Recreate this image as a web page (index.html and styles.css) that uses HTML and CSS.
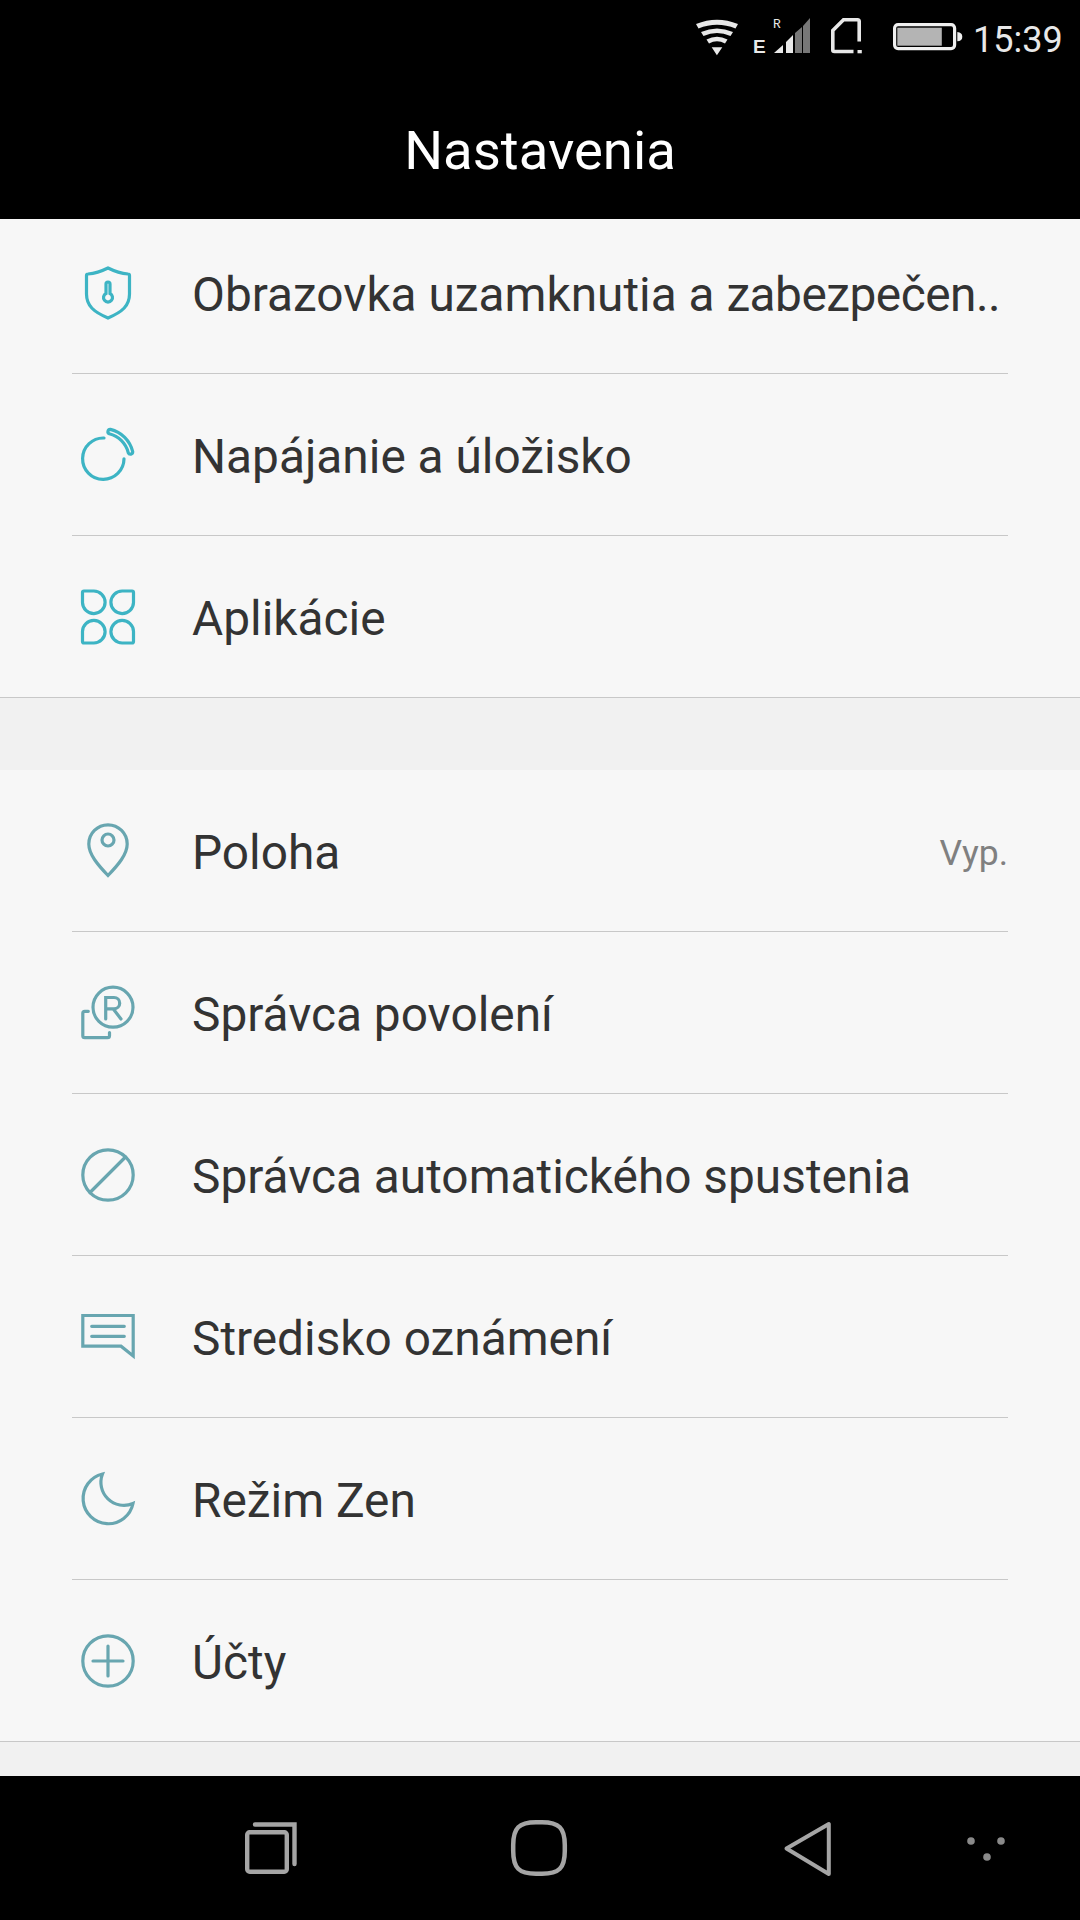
FILE: index.html
```html
<!DOCTYPE html>
<html lang="sk">
<head>
<meta charset="utf-8">
<title>Nastavenia</title>
<link rel="stylesheet" href="styles.css">
</head>
<body>
<div class="screen">
  <header class="top">
    <div class="status">
      <svg class="st-wifi" width="42" height="37" viewBox="0 0 42 37"><path d="M0 5Q21-3.500 42 5L39.500 9.500Q21 2 2.500 9.500Z M5 13Q21 6 37 13L34.500 17Q21 11 7.500 17Z M10.500 20.500Q21 15 31.500 20.500L29 24.500Q21 20 13 24.500Z M15.700 28.300H26.300L20.900 36.300Z" fill="#e8e8e8"/></svg>
      <svg class="st-signal" width="57" height="44" viewBox="0 0 57 44"><text class="st-e" x="0" y="35">E</text><text class="st-r" x="20" y="10">R</text><path d="M21 35L30 27V35Z M33 35V24L40 17V35Z" fill="#e8e8e8"/><path d="M42 35V15L49 9V35Z M50 35V8L57 0V35Z" fill="#777"/></svg>
      <svg class="st-sim" width="31" height="36" viewBox="0 0 31 36"><path d="M28.200 23.500V3.500Q28.200 1.800 26.500 1.800H12.500L1.800 12.500V32Q1.800 33.500 3.500 33.500H22.500" fill="none" stroke="#e8e8e8" stroke-width="3.600"/><rect x="26.500" y="32" width="4.300" height="3.300" fill="#e8e8e8"/></svg>
      <svg class="st-batt" width="70" height="28" viewBox="0 0 70 28"><rect x="1.600" y="1.600" width="60" height="24" rx="3.500" fill="none" stroke="#f0f0f0" stroke-width="3.200"/><rect x="4.300" y="4.700" width="44.500" height="18" fill="#b4b4b4"/><path d="M64.300 9Q69.300 9.500 69.300 13.700Q69.300 18 64.300 18.300Z" fill="#f0f0f0"/></svg>
      <span class="clock">15:39</span>
    </div>
    <h1 class="title">Nastavenia</h1>
  </header>

  <main class="list">
    <section class="group group-first">
      <div class="row"><svg class="ico cy" viewBox="0 0 60 60"><path d="M30 5C24 8 16 10.500 10 11Q8.500 11 8.500 12.500V31C8.500 43 16 49 30 55C44 49 51.500 43 51.500 31V12.500Q51.500 11 50 11C44 10.500 36 8 30 5Z"/><path d="M28 30.500V21a2 2 0 0 1 4 0V30.500a4.500 4.500 0 1 1-4 0Z"/></svg><span class="label">Obrazovka uzamknutia a <span class="tight">zabezpečen..</span></span></div>
      <div class="row"><svg class="ico cy" viewBox="0 0 60 60"><path d="M26 13A20.700 20.700 0 1 0 46 33.800"/><path d="M32.400 4.400A30.200 30.200 0 0 1 54.700 26.700A2.300 2.300 0 0 1 50.300 27.800A25.700 25.700 0 0 0 31.300 8.800A2.300 2.300 0 0 1 32.400 4.400Z"/></svg><span class="label">Napájanie a úložisko</span></div>
      <div class="row"><svg class="ico cy" viewBox="0 0 60 60"><path d="M6 4H15.800A11.300 11.300 0 1 1 4.500 15.500V5.500Q4.500 4 6 4Z"/><path d="M54 4H44.200A11.300 11.300 0 1 0 55.500 15.500V5.500Q55.500 4 54 4Z"/><path d="M6 56H15.800A11.300 11.300 0 1 0 4.500 44.500V54.500Q4.500 56 6 56Z"/><path d="M54 56H44.200A11.300 11.300 0 1 1 55.500 44.500V54.500Q55.500 56 54 56Z"/></svg><span class="label">Aplikácie</span></div>
    </section>
    <div class="gap"></div>
    <section class="group">
      <div class="row"><svg class="ico te" viewBox="0 0 60 60"><path d="M30 54.500C20 44 10.800 33.500 10.800 23A19.200 19.200 0 0 1 49.200 23C49.200 33.500 40 44 30 54.500Z"/><circle cx="30" cy="19" r="6"/></svg><span class="label">Poloha</span><span class="value">Vyp.</span></div>
      <div class="row"><svg class="ico te" viewBox="0 0 60 60"><circle cx="35" cy="24.200" r="20"/><path d="M27.700 36V14.500H36a5.700 5.700 0 0 1 0 11.400H27.700M35.300 26L43 36"/><path d="M10.300 28.300H6.800Q4.800 28.300 4.800 30.300V52.700Q4.800 54.700 6.800 54.700H29.500Q31.500 54.700 31.500 52.700V49.500"/></svg><span class="label">Správca povolení</span></div>
      <div class="row"><svg class="ico te" viewBox="0 0 60 60"><circle cx="30" cy="30" r="25.200"/><path d="M12 47.500L47.500 12"/></svg><span class="label">Správca automatického spustenia</span></div>
      <div class="row"><svg class="ico te" viewBox="0 0 60 60"><path d="M4.800 8.500H55.200V49L43 39.200H4.800Z"/><path d="M13.700 19.300H46.300M13.700 29.300H46.300"/></svg><span class="label">Stredisko oznámení</span></div>
      <div class="row"><svg class="ico te" viewBox="0 0 60 60"><path d="M24.500 5A25.200 25.200 0 1 0 55 34.500A23 23 0 0 1 24.500 5Z"/></svg><span class="label">Režim Zen</span></div>
      <div class="row"><svg class="ico te" viewBox="0 0 60 60"><circle cx="30" cy="30" r="25.200"/><path d="M30 15V45M15 30H45"/></svg><span class="label">Účty</span></div>
    </section>
    <div class="gap-end"></div>
  </main>

  <nav class="nav">
    <svg class="nv nv-rec" width="52" height="52" viewBox="0 0 52 52"><rect x="2.200" y="10.200" width="39.600" height="39.600" rx="2.500" fill="none" stroke="#a5a5a5" stroke-width="4.400"/><path d="M10 2.500H49.500V42" fill="none" stroke="#a5a5a5" stroke-width="4.400" stroke-linecap="round"/></svg>
    <svg class="nv nv-home" width="58" height="58" viewBox="0 0 58 58"><path d="M29 3.200H32C49 3.200 54.800 9 54.800 26V32C54.800 49 49 54.800 32 54.800H26C9 54.800 3.200 49 3.200 32V26C3.200 9 9 3.200 26 3.200Z" fill="none" stroke="#a5a5a5" stroke-width="4.500"/></svg>
    <svg class="nv nv-back" width="50" height="56" viewBox="0 0 50 56"><path d="M45.800 3V53L3.500 27.500Z" fill="none" stroke="#a5a5a5" stroke-width="4" stroke-linejoin="round"/></svg>
    <svg class="nv nv-dots" width="46" height="34" viewBox="0 0 46 34"><g fill="#8a8a8a"><circle cx="8" cy="10" r="3.800"/><circle cx="38" cy="10" r="3.800"/><circle cx="24" cy="26" r="3.800"/></g></svg>
  </nav>
</div>
</body>
</html>
```
FILE: styles.css
```css
* { box-sizing: border-box; }
html, body { margin: 0; padding: 0; }
body { width: 1080px; height: 1920px; overflow: hidden; font-family: Roboto, "Noto Sans", sans-serif; background: #000; }
.screen { width: 1080px; height: 1920px; display: flex; flex-direction: column; }
.top { height: 219px; background: #000; flex: none; display: flex; flex-direction: column; }
.status { height: 76px; display: flex; align-items: flex-start; padding-top: 18px; padding-left: 696px; color: #e8e8e8; }
.status svg { flex: none; }
.st-wifi { margin-top: 1px; margin-right: 15px; }
.st-signal { margin-right: 21px; }
.st-sim { margin-right: 31px; }
.st-batt { margin-top: 5px; margin-right: 10px; }
.st-e { font: bold 19px "Liberation Sans", sans-serif; fill: #e8e8e8; }
.st-r { font: 13px "Liberation Mono", monospace; fill: #e8e8e8; }
.clock { margin-top: 2px; font-size: 36px; line-height: 40px; color: #e8e8e8; }
.title { margin: 0; flex: 1; display: flex; align-items: center; justify-content: center; padding-top: 4px; font-size: 54.500px; font-weight: 400; color: #fff; }
.list { flex: 1; background: #f1f1f1; display: flex; flex-direction: column; overflow: hidden; }
.group { background: #f7f7f7; border-bottom: 1px solid #c8c8c8; }
.group-first { margin-top: -7px; }
.gap { height: 72px; flex: none; }
.gap-end { flex: 1; }
.row { height: 162px; margin: 0 72px; display: flex; align-items: center; border-bottom: 1px solid #c8c8c8; }
.row:last-child { border-bottom: 0; height: 161px; }
.ico { width: 60px; height: 60px; margin-right: 54px; margin-left: 6px; flex: none; fill: none; stroke-width: 3.200; stroke-linecap: round; }
.cy { stroke: #3db4c4; }
.te { stroke: #68a6b0; }
.label { flex: 1; font-size: 47.800px; color: #333; white-space: nowrap; padding-top: 4px; }
.tight { letter-spacing: -0.500px; }
.value { font-size: 35.500px; color: #808080; padding-top: 4px; }
.nav { height: 144px; flex: none; background: #000; position: relative; }
.nv { position: absolute; }
.nv-rec { left: 245px; top: 46px; }
.nv-home { left: 510px; top: 43px; }
.nv-back { left: 783px; top: 45px; }
.nv-dots { left: 963px; top: 55px; }
```
